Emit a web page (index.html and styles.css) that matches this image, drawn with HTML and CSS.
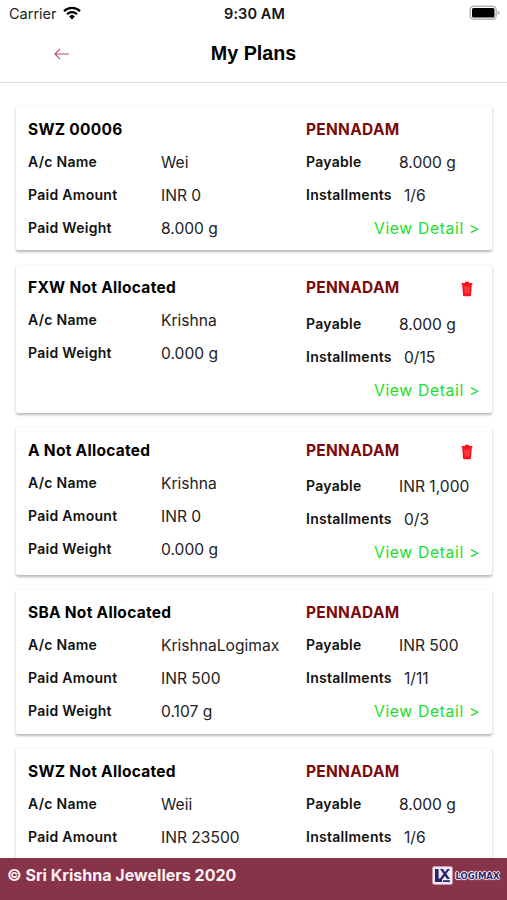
FILE: index.html
```html
<!DOCTYPE html>
<html lang="en">
<head>
<meta charset="utf-8">
<title>My Plans</title>
<link rel="stylesheet" href="styles.css">
</head>
<body>
<div class="app">
  <div class="status">
    <div class="carrier">Carrier
      <svg class="wifi" width="18" height="14" viewBox="0 0 18 14"><g fill="none" stroke="#000" stroke-width="2.3"><path d="M1 5.1a11.3 11.3 0 0 1 16 0"/><path d="M4 8.2a7.1 7.1 0 0 1 10 0"/></g><path d="M6.1 10.5a4.1 4.1 0 0 1 5.8 0L9 13.6z"/></svg>
    </div>
    <div class="clock">9:30 AM</div>
    <svg class="battery" width="32" height="16" viewBox="0 0 32 16"><rect x="2.2" y="1.2" width="26" height="13" rx="3.6" fill="#fff" stroke="#b5b5b5" stroke-width="1.5"/><rect x="4" y="3" width="22.5" height="9.5" rx="1.5"/><path d="M29.6 5.5q2.2.7 2.2 2.2t-2.2 2.2z" fill="#b5b5b5"/></svg>
  </div>
  <header class="header">
    <svg class="back" width="16" height="12" viewBox="0 0 16 12"><path d="M6 .8.9 6 6 11.2M1 6h13.8" fill="none" stroke="#b04a6c" stroke-width="1.1"/></svg>
    <h1>My Plans</h1>
  </header>
  <main class="list">
    <section class="card">
      <div class="left"><h2>SWZ 00006</h2>
        <div class="row"><span class="label">A/c Name</span><span class="value">Wei</span></div>
        <div class="row"><span class="label">Paid Amount</span><span class="value">INR 0</span></div>
        <div class="row"><span class="label">Paid Weight</span><span class="value">8.000 g</span></div>
      </div>
      <div class="right"><h2 class="branch">PENNADAM</h2>
        <div class="row"><span class="label">Payable</span><span class="value">8.000 g</span></div>
        <div class="row inst"><span class="label">Installments</span><span class="value">1/6</span></div>
        <a class="detail">View Detail &gt;</a>
      </div>
    </section>
    <section class="card deletable">
      <div class="left"><h2>FXW Not Allocated</h2>
        <div class="row"><span class="label">A/c Name</span><span class="value">Krishna</span></div>
        <div class="row"><span class="label">Paid Weight</span><span class="value">0.000 g</span></div>
      </div>
      <div class="right"><div class="top"><h2 class="branch">PENNADAM</h2><svg class="trash" width="12" height="16" viewBox="0 0 12 16"><path d="M4 2V.8h4V2h3.4v1.5H.6V2zM1.2 3.400h9.6L10 14q-.1 1.2-1.3 1.2H3.3Q2.1 15.2 2 14z" fill="#fb1119"/><path d="M4 5.5l.3 7M6 5.5v7M8 5.5l-.3 7" stroke="#ff777b" stroke-width=".7"/></svg></div>
        <div class="row"><span class="label">Payable</span><span class="value">8.000 g</span></div>
        <div class="row inst"><span class="label">Installments</span><span class="value">0/15</span></div>
        <a class="detail">View Detail &gt;</a>
      </div>
    </section>
    <section class="card deletable">
      <div class="left"><h2>A Not Allocated</h2>
        <div class="row"><span class="label">A/c Name</span><span class="value">Krishna</span></div>
        <div class="row"><span class="label">Paid Amount</span><span class="value">INR 0</span></div>
        <div class="row"><span class="label">Paid Weight</span><span class="value">0.000 g</span></div>
      </div>
      <div class="right"><div class="top"><h2 class="branch">PENNADAM</h2><svg class="trash" width="12" height="16" viewBox="0 0 12 16"><path d="M4 2V.8h4V2h3.4v1.5H.6V2zM1.2 3.4h9.6L10 14q-.1 1.2-1.3 1.2H3.3Q2.1 15.2 2 14z" fill="#fb1119"/><path d="M4 5.5l.3 7M6 5.5v7M8 5.5l-.3 7" stroke="#ff777b" stroke-width=".7"/></svg></div>
        <div class="row"><span class="label">Payable</span><span class="value">INR 1,000</span></div>
        <div class="row inst"><span class="label">Installments</span><span class="value">0/3</span></div>
        <a class="detail">View Detail &gt;</a>
      </div>
    </section>
    <section class="card">
      <div class="left"><h2>SBA Not Allocated</h2>
        <div class="row"><span class="label">A/c Name</span><span class="value">KrishnaLogimax</span></div>
        <div class="row"><span class="label">Paid Amount</span><span class="value">INR 500</span></div>
        <div class="row"><span class="label">Paid Weight</span><span class="value">0.107 g</span></div>
      </div>
      <div class="right"><h2 class="branch">PENNADAM</h2>
        <div class="row"><span class="label">Payable</span><span class="value">INR 500</span></div>
        <div class="row inst"><span class="label">Installments</span><span class="value">1/11</span></div>
        <a class="detail">View Detail &gt;</a>
      </div>
    </section>
    <section class="card">
      <div class="left"><h2>SWZ Not Allocated</h2>
        <div class="row"><span class="label">A/c Name</span><span class="value">Weii</span></div>
        <div class="row"><span class="label">Paid Amount</span><span class="value">INR 23500</span></div>
      </div>
      <div class="right"><h2 class="branch">PENNADAM</h2>
        <div class="row"><span class="label">Payable</span><span class="value">8.000 g</span></div>
        <div class="row inst"><span class="label">Installments</span><span class="value">1/6</span></div>
      </div>
    </section>
  </main>
  <footer class="footer">
    <span class="copy">© Sri Krishna Jewellers 2020</span>
    <div class="logo">
      <svg width="21" height="19" viewBox="0 0 21 19"><rect x=".5" y=".5" width="20" height="18" rx="2" fill="#f3e9f2" stroke="#c995ae"/><path d="M3 3h3.6v9.5H10V16H3z" fill="#29246f"/><path d="M8 3h3l2 3.100L15.300 3H18l-3.700 4.700L18 13h-2.900l-2.200-3-2.400 3H7.700l3.800-5.200zM11 14.200h7V16h-7z" fill="#29246f"/></svg>
      <span class="word">LOGIMAX</span>
    </div>
  </footer>
</div>
</body>
</html>
```
FILE: styles.css
```css
* { box-sizing: border-box; }
body { margin: 0; background: #fff; color: #111; font-family: Inter, "Liberation Sans", sans-serif; }
.app { width: 507px; height: 900px; display: flex; flex-direction: column; overflow: hidden; }
.status { height: 27px; flex: none; display: grid; grid-template-columns: 1fr auto 1fr; align-items: center; padding: 0 7px 0 9px; }
.carrier { display: flex; align-items: center; gap: 6px; font-size: 14.5px; color: #222; letter-spacing: 0; }
.wifi { margin-top: -2px; }
.clock { font-size: 14.5px; font-weight: 600; letter-spacing: .1px; }
.battery { justify-self: end; margin-top: -1px; }
.header { height: 56px; flex: none; display: grid; grid-template-columns: 54px 1fr 54px; align-items: center; border-bottom: 1px solid #dcdcdc; }
.back { margin: -2px 0 0 54px; }
h1 { margin: -3px 0 0; text-align: center; font: bold 19.7px/24px "Liberation Sans", sans-serif; color: #000; }
.list { flex: 1; min-height: 0; overflow: hidden; padding: 23px 15px 0 16px; display: flex; flex-direction: column; gap: 14.5px; }
.card { flex: none; height: 144.2px; padding: 13.5px 12px 0; display: grid; grid-template-columns: 278px 1fr; align-items: start; background: #fff; border-radius: 2px; box-shadow: 0 1.5px 2.5px rgba(0,0,0,.28); }
.deletable { height: 148px; }
h2 { margin: 0; height: 25px; font-size: 15.5px; line-height: 20px; font-weight: 700; letter-spacing: .28px; white-space: nowrap; color: #000; }
.branch { color: #7b0a0f; }
.row { height: 33px; display: grid; grid-template-columns: 133px 1fr; line-height: 33px; white-space: nowrap; }
.right .row { grid-template-columns: 93px 1fr; }
.right .inst { grid-template-columns: 98px 1fr; }
.label { font-size: 14px; font-weight: 600; letter-spacing: .28px; }
.value { font-size: 15.6px; padding-top: 1px; color: #222; }
.detail { display: block; text-align: right; font-size: 15.7px; line-height: 35px; letter-spacing: .65px; color: #1bdd2a; }
.top { height: 28.5px; display: flex; justify-content: space-between; padding-right: 7.5px; }
.trash { margin-top: 3px; }
.footer { height: 42px; flex: none; display: flex; align-items: flex-start; justify-content: space-between; background: #87344b; padding: 7px 7.5px 0 7px; }
.copy { color: #fff0f4; font-size: 16px; font-weight: 700; line-height: 20px; letter-spacing: .02px; }
.logo { display: flex; align-items: center; gap: 2px; padding-top: 1px; }
.word { padding-top: 1px; font: bold 8.5px/12px "DejaVu Sans", sans-serif; color: #29246f; text-shadow: 0 0 1px #fff, 1px 0 1px #fff, -1px 0 1px #fff, 0 1px 1px #fff, 0 -1px 1px #fff; }
```
